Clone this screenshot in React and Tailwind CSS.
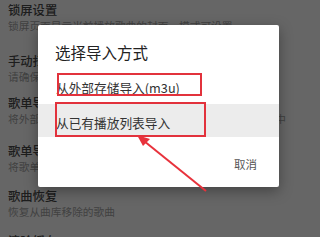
import React from "react";

const FONT = { fontFamily: '"Noto Sans CJK SC", "Noto Sans", sans-serif' };

const items = [
  { title: "锁屏设置", sub: "锁屏页面显示当前播放歌曲的封面，模式可设置", mt: "mt-[2px]" },
  { title: "手动扫描", sub: "请确保已授予应用读取存储的权限", mt: "mt-[20px]" },
  { title: "歌单导入", sub: "将外部存储中的歌单文件都导入到本应用的本地歌单列表中", mt: "mt-[11px]" },
  { title: "歌单导出", sub: "将歌单导出到外部存储", mt: "mt-[17px]" },
  { title: "歌曲恢复", sub: "恢复从曲库移除的歌曲", mt: "mt-[14px]" },
  { title: "清除缓存", sub: "清除应用产生的缓存文件", mt: "mt-[14px]" },
];

export default function App() {
  return (
    <div className="relative h-[237px] w-[320px] overflow-hidden bg-white" style={FONT}>
      {/* settings list behind the dialog */}
      <div className="flex flex-col px-2">
        {items.map((it) => (
          <div key={it.title} className={it.mt}>
            <div className="text-[12.3px] leading-4 font-medium text-[#4a4a4a] whitespace-nowrap">{it.title}</div>
            <div className="mt-px text-[10.7px] leading-[14px] text-[#a3a3a3] whitespace-nowrap">{it.sub}</div>
          </div>
        ))}
      </div>

      {/* dim overlay */}
      <div className="absolute inset-0 bg-black/60" />

      {/* dialog */}
      <div className="absolute left-[38px] top-[25px] flex h-[162px] w-[241px] flex-col rounded-[2px] bg-white shadow-[0_4px_14px_rgba(0,0,0,0.35)]">
        <div className="pl-[17px] pt-[17px] text-[15.5px] leading-5 text-[#222]">选择导入方式</div>
        <div className="mt-[9px] flex h-[33px] items-center pl-[18px] text-[12.7px] text-[#333]">从外部存储导入(m3u)</div>
        <div className="flex h-[33px] items-center bg-[#ececec] pl-[18px] pt-[5px] text-[12.7px] text-[#333]">从已有播放列表导入</div>
        <div className="flex flex-1 items-center justify-end pr-[22px] pt-[6px]">
          <span className="text-[11.5px] text-[#555]">取消</span>
        </div>
      </div>

      {/* annotation boxes */}
      <div className="absolute left-[57px] top-[73px] h-[23px] w-[145px] border-2 border-[#e2323c]" />
      <div className="absolute left-[55px] top-[102px] h-[35px] w-[151px] border-2 border-[#e2323c]" />

      {/* annotation arrow */}
      <svg className="absolute inset-0" width="320" height="237" viewBox="0 0 320 237">
        <line x1="206" y1="191" x2="144" y2="141" stroke="#e8323c" strokeWidth="2" />
        <polygon points="137,135 150,139 143,146" fill="#e8323c" />
      </svg>
    </div>
  );
}
